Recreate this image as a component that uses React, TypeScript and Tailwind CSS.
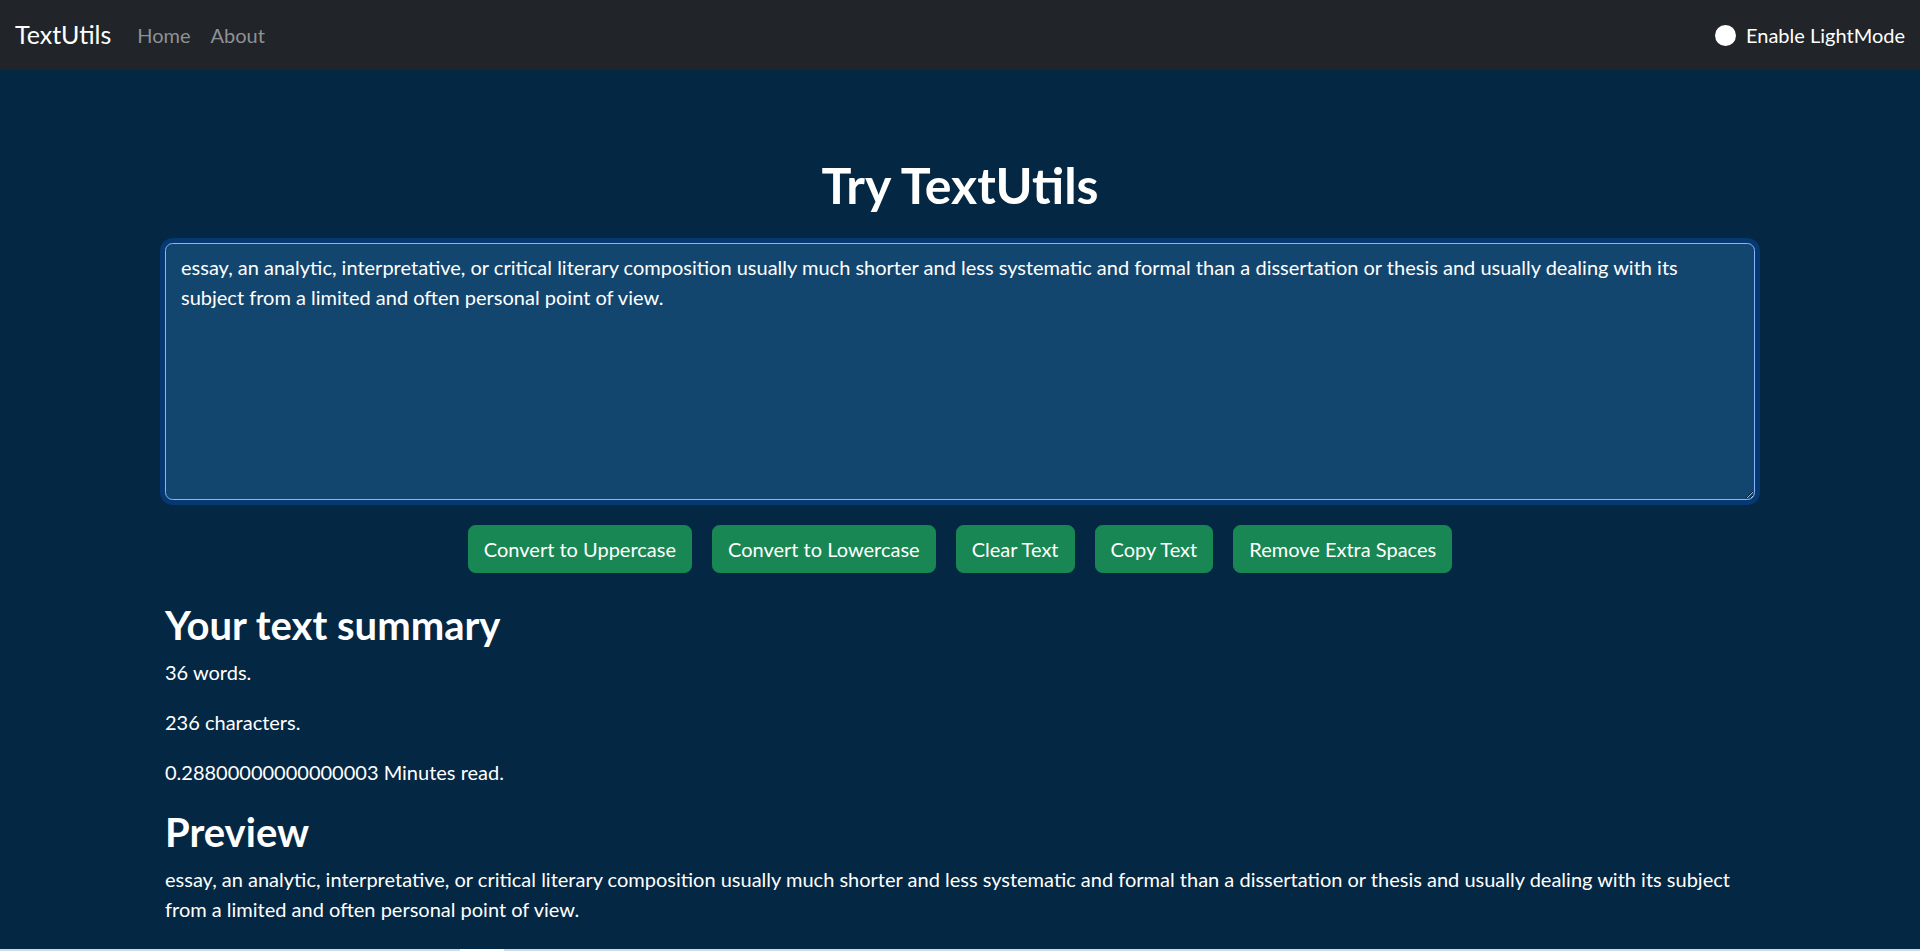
import React from "react";

const essay =
  "essay, an analytic, interpretative, or critical literary composition usually much shorter and less systematic and formal than a dissertation or thesis and usually dealing with its subject from a limited and often personal point of view.";

export default function App() {
  const buttons = [
    "Convert to Uppercase",
    "Convert to Lowercase",
    "Clear Text",
    "Copy Text",
    "Remove Extra Spaces",
  ];
  return (
    <div className="h-[951px] overflow-hidden bg-[#042743] text-white flex flex-col font-['Lato',sans-serif]">
      <nav className="h-[70px] shrink-0 bg-[#212529] flex items-center px-[15px]">
        <span className="text-[25px] leading-[37.5px] text-white mr-[16px]">TextUtils</span>
        <a className="px-[10px] text-[20px] leading-[30px] text-[#8f9194]">Home</a>
        <a className="px-[10px] text-[20px] leading-[30px] text-[#8f9194]">About</a>
        <div className="ml-auto flex items-center">
          <span className="w-[21px] h-[21px] rounded-full bg-white" />
          <span className="ml-[10px] text-[20px] leading-[30px] text-white">Enable LightMode</span>
        </div>
      </nav>

      <main className="mx-[165px] w-[1590px]">
        <h1 className="mt-[85px] text-center text-[50px] leading-[60px] font-bold">Try TextUtils</h1>
        <div className="mt-[28px] rounded-[8px] shadow-[0_0_0_5px_rgba(13,110,253,0.25)]">
          <textarea
            readOnly
            value={essay}
            rows={8}
            className="block w-full h-[257px] resize-y bg-[#13466e] text-white border border-[#86b7fe] rounded-[7.5px] px-[15px] py-[7.5px] text-[20px] leading-[30px] outline-none font-['Lato',sans-serif]"
          />
        </div>
        <div className="mt-[25px] flex justify-center gap-[20px]">
          {buttons.map((b) => (
            <button
              key={b}
              className="h-[48px] px-[15px] bg-[#198754] border border-[#198754] rounded-[7.5px] text-white text-[20px] leading-[30px] font-['Lato',sans-serif]"
            >
              {b}
            </button>
          ))}
        </div>

        <h2 className="mt-[28px] text-[40px] leading-[48px] font-bold">Your text summary</h2>
        <p className="mt-[8px] text-[20px] leading-[30px]">36 words.</p>
        <p className="mt-[20px] text-[20px] leading-[30px]">236 characters.</p>
        <p className="mt-[20px] text-[20px] leading-[30px]">0.28800000000000003 Minutes read.</p>
        <h2 className="mt-[21px] text-[40px] leading-[48px] font-bold">Preview</h2>
        <p className="mt-[8px] text-[20px] leading-[30px]">{essay}</p>
      </main>

      <div className="mt-auto h-[2px] flex bg-[#d4dbe2]">
        <div className="w-[460px]" />
        <div className="w-[44px] bg-white" />
      </div>
    </div>
  );
}
